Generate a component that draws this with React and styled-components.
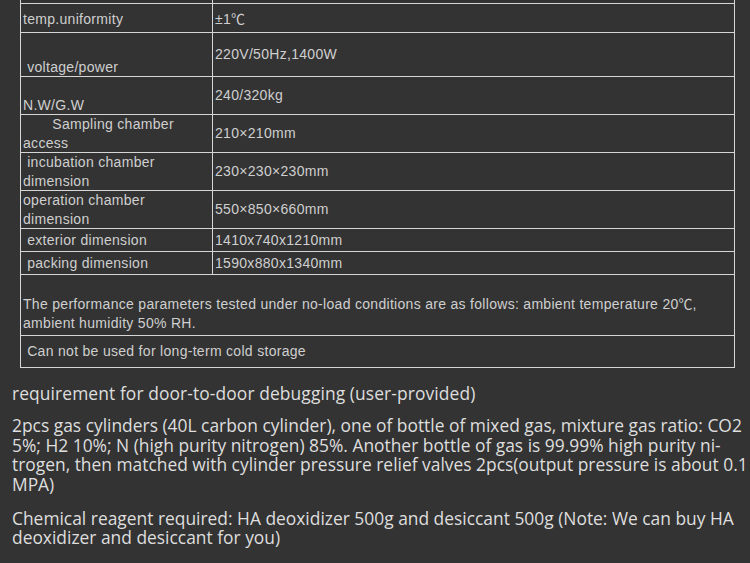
import React from "react";
import styled, { createGlobalStyle } from "styled-components";

const GlobalStyle = createGlobalStyle`
  html, body {
    margin: 0;
    padding: 0;
    background: #333333;
    overflow: hidden;
  }
`;

const specs = [
  { label: "temp. accuracy", value: ["±0.3", true], h: 23 },
  { label: "temp.uniformity", value: ["±1", true], h: 29, pad: 3 },
  { label: "\u00a0voltage/power", value: ["220V/50Hz,1400W"], h: 44, bottom: true },
  { label: "N.W/G.W", value: ["240/320kg"], h: 38, bottom: true },
  {
    label: "\u00a0\u00a0\u00a0\u00a0\u00a0\u00a0\u00a0Sampling chamber access",
    value: ["210×210mm"],
    h: 38,
  },
  { label: "\u00a0incubation chamber dimension", value: ["230×230×230mm"], h: 38 },
  { label: "operation chamber dimension", value: ["550×850×660mm"], h: 38 },
  { label: "\u00a0exterior dimension", value: ["1410x740x1210mm"], h: 23 },
  { label: "\u00a0packing dimension", value: ["1590x880x1340mm"], h: 23 },
];

function App() {
  return (
    <Page>
      <GlobalStyle />
      <SpecTable>
        <colgroup>
          <col style={{ width: 192 }} />
          <col />
        </colgroup>
        <tbody>
          {specs.map((row) => (
            <Row key={row.label} h={row.h}>
              <Cell bottom={row.bottom} pad={row.pad}>
                {row.label}
              </Cell>
              <Cell pad={row.pad}>
                {row.value[0]}
                {row.value[1] && <Celsius>℃</Celsius>}
              </Cell>
            </Row>
          ))}
          <Row h={61}>
            <NoteCell colSpan={2}>
              The performance parameters tested under no-load conditions are as
              follows: ambient temperature 20<Celsius>℃</Celsius>, ambient humidity 50% RH.
            </NoteCell>
          </Row>
          <Row h={32}>
            <Cell colSpan={2}>{"\u00a0Can not be used for long-term cold storage"}</Cell>
          </Row>
        </tbody>
      </SpecTable>

      <Notes>
        <Heading>requirement for door-to-door debugging (user-provided)</Heading>
        <Para>
          2pcs gas cylinders (40L carbon cylinder), one of bottle of mixed gas, mixture gas ratio: CO2
          <br />
          5%; H2 10%; N (high purity nitrogen) 85%. Another bottle of gas is 99.99% high purity ni-
          <br />
          trogen, then matched with cylinder pressure relief valves 2pcs(output pressure is about 0.1
          <br />
          MPA)
        </Para>
        <Para>
          Chemical reagent required: HA deoxidizer 500g and desiccant 500g (Note: We can buy HA
          <br />
          deoxidizer and desiccant for you)
        </Para>
      </Notes>
    </Page>
  );
}

const Page = styled.div`
  width: 750px;
  height: 563px;
  overflow: hidden;
  background: #333333;
`;

const SpecTable = styled.table`
  width: 715px;
  margin: -20px 0 0 20px;
  border-collapse: collapse;
  table-layout: fixed;
  border: 1px solid #d6d6d6;

  font-family: "Liberation Sans", Arial, sans-serif;
  font-size: 14px;
  line-height: 18.5px;
  letter-spacing: 0.3px;
  color: #cfcfcf;
`;

const Celsius = styled.span`
  font-family: "Noto Sans CJK SC", sans-serif;
  font-size: 14px;
  letter-spacing: 0;
  line-height: 1;
`;

const Row = styled.tr`
  height: ${({ h }) => h}px;
`;

const Cell = styled.td`
  border: 1px solid #d6d6d6;
  padding: ${({ pad }) => pad || 0}px 2px 0 2px;
  vertical-align: ${({ bottom }) => (bottom ? "bottom" : "middle")};
  white-space: normal;
`;

const NoteCell = styled(Cell)`
  vertical-align: bottom;
  padding: 0 2px 3px 2px;
`;

const Notes = styled.div`
  padding: 16px 0 0 12px;

  font-family: "Open Sans", "Noto Sans", sans-serif;
  font-size: 17.4px;
  line-height: 19.4px;
  color: #dedede;
  white-space: nowrap;
`;

const Heading = styled.p`
  margin: 0 0 13px 0;
  letter-spacing: 0.1px;
`;

const Para = styled.p`
  margin: 0 0 15px 0;
`;

export default App;
